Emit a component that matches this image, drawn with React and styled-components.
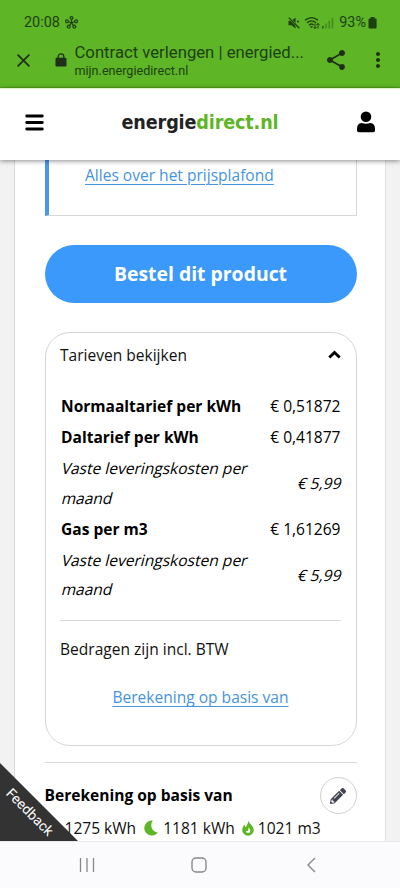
import React from 'react'
import styled,{createGlobalStyle} from 'styled-components'
import {FaPencilAlt} from 'react-icons/fa'
import {MdShare,MdMoreVert} from 'react-icons/md'

const GlobalStyle = createGlobalStyle`
    *{
        box-sizing  : border-box;
    }
    body{
        margin      : 0;
        background  : #f2f2f2;
        font-family : 'Open Sans', sans-serif;
        font-size   : 15.56px;
        color       : #111;
    }
`

const Screen = styled.div`
    display         : flex;
    flex-direction  : column;
    width           : 400px;
    height          : 888px;
    overflow        : hidden;
`

const Browser = styled.div`
    height          : 88px;
    flex            : none;
    background      : #5eb526;
    border-bottom   : 1px solid #50a51d;
    color           : #1d3f12;
    font-family     : Roboto, sans-serif;
`

const StatusBar = styled.div`
    display         : flex;
    align-items     : center;
    height          : 36px;
    padding         : 9px 23px 0 24px;
    font-size       : 14.4px;
`

const StatusIcons = styled.div`
    display         : flex;
    align-items     : center;
    margin-left     : auto;
`

const Toolbar = styled.div`
    display         : flex;
    align-items     : center;
    height          : 48px;
    padding-left    : 17px;
    color           : #1f2f1a;
`

const Titles = styled.div`
    width           : 234px;
    margin          : 1px 0 0 8px;
    white-space     : nowrap;
    color           : #1d3f12;
`

const Title = styled.div`
    font-size       : 16.7px;
    line-height     : 20px;
`

const Url = styled.div`
    font-size       : 12.6px;
    line-height     : 16px;
`

const ToolIcon = styled.div`
    display         : flex;
    font-size       : ${p=>p.size};
    margin          : ${p=>p.margin};
`

const Header = styled.header`
    position        : relative;
    z-index         : 1;
    display         : flex;
    flex            : none;
    align-items     : center;
    justify-content : space-between;
    height          : 72px;
    padding         : 0 24px 5px 25px;
    background      : white;
    border-top      : 1px solid #d9f7c2;
    box-shadow      : 0 1px 5px rgba(0,0,0,0.45);
    color           : black;
`

const Logo = styled.div`
    margin-top      : 2px;
    font-family     : 'DejaVu Sans', 'DejaVu Sans Condensed', sans-serif;
    font-stretch    : condensed;
    font-weight     : 700;
    font-size       : 19.6px;
    line-height     : 24px;
    letter-spacing  : -0.15px;
    color           : #222;
    span{
        color       : #5eb526;
    }
`

const Content = styled.main`
    flex            : 1;
    min-height      : 0;
    overflow        : hidden;
    margin          : 0 14px;
    padding         : 0 28.5px 0 29.5px;
    background      : white;
    border-left     : 1px solid #d8d8d8;
    border-right    : 1px solid #e0e0e0;
`

const Info = styled.div`
    height          : 56px;
    padding         : 3px 0 0 36.5px;
    border          : 1px solid #d8d8d8;
    border-top      : 0;
    border-left     : 4px solid #4a98ec;
    line-height     : 24px;
`

const Link = styled.a`
    color           : #4694dd;
    text-decoration : underline;
    text-decoration-thickness : 1px;
    text-underline-offset : 3px;
`

const Order = styled.button`
    display         : block;
    width           : 100%;
    height          : 58px;
    margin          : 29px 0;
    padding         : 0 0 2px;
    border          : 0;
    border-radius   : 29px;
    background      : #3b99fc;
    color           : white;
    font            : 700 19.4px 'Open Sans', sans-serif;
`

const Card = styled.section`
    height          : 414px;
    padding         : 0 14.5px;
    border          : 1px solid #d6d6d6;
    border-radius   : 25px;
`

const CardHead = styled.div`
    display         : flex;
    align-items     : center;
    justify-content : space-between;
    height          : 43px;
    margin-bottom   : 15px;
`

const Rate = styled.div`
    display         : flex;
    align-items     : center;
    justify-content : space-between;
    padding         : 1px 0.5px 1px 1px;
    line-height     : 29.2px;
    color           : black;
`

const RateName = styled.div`
    font-weight     : ${p=>p.bold?700:400};
    white-space     : nowrap;
`

// slanted upright face, each line leans on its own so they stay left aligned
const RateLine = styled.div`
    transform       : ${p=>p.slanted?'translateX(1px) skewX(-14deg)':'none'};
`

const Vat = styled.div`
    margin-top      : 15px;
    padding-top     : 14px;
    border-top      : 1px solid #d8d8d8;
    line-height     : 29px;
`

const CardLink = styled.div`
    margin-top      : 19px;
    line-height     : 29px;
    text-align      : center;
`

const Basis = styled.section`
    margin-top      : 16px;
    border-top      : 1px solid #d8d8d8;
`

const BasisHead = styled.div`
    display         : flex;
    align-items     : center;
    justify-content : space-between;
    height          : 37px;
    margin-top      : 14px;
    font-weight     : 700;
    color           : black;
    span{
        margin-top  : -2px;
    }
`

const Edit = styled.div`
    display         : flex;
    align-items     : center;
    justify-content : center;
    width           : 37px;
    height          : 37px;
    border          : 1px solid #d0d0d4;
    border-radius   : 50%;
    color           : #42454f;
    font-size       : 16px;
`

const Usage = styled.div`
    display         : flex;
    align-items     : center;
    height          : 27px;
    padding-left    : 20px;
    white-space     : nowrap;
`

const Amount = styled.span`
    margin          : ${p=>p.margin};
`

const Feedback = styled.div`
    position        : absolute;
    left            : 0;
    top             : 763px;
    width           : 78px;
    height          : 78px;
    background      : #333;
    clip-path       : polygon(0 0,100% 100%,0 100%);
    color           : white;
    font            : 14px Roboto, sans-serif;
    span{
        position    : absolute;
        left        : 30px;
        top         : 48.5px;
        line-height : 18px;
        transform   : translate(-50%,-50%) rotate(45deg);
    }
`

const NavBar = styled.nav`
    display         : flex;
    flex            : none;
    align-items     : center;
    justify-content : space-between;
    height          : 47px;
    padding         : 0 82px 0 77px;
    background      : #fbfbfd;
    border-top      : 1px solid #e9e9ec;
`

const HomeIcon = styled.svg`
    margin-right    : 4px;
`

const Flower = () => <svg width='13' height='13' viewBox='0 0 13 13' fill='none' stroke='currentColor' strokeWidth='1.2' style={{marginLeft:5}}>
    {[0,72,144,216,288].map(a=><g key={a} transform={`rotate(${a} 6.5 6.8)`}>
        <path d='M6.5 6.8V3.5'/>
        <circle cx='6.5' cy='2' r='1.4'/>
    </g>)}
</svg>

const Mute = () => <svg width='12' height='12' viewBox='0 0 12 12' fill='currentColor' style={{marginRight:4}}>
    <path d='M.5 3.8h3L7.5.6v10.800L3.500 8.200h-3z'/>
    <path d='M.8.600l10.500 10.600' stroke='#5eb526' strokeWidth='2.2'/>
    <path d='M.8.600l10.500 10.600M9 4.500h2' stroke='currentColor' strokeWidth='1.3'/>
</svg>

const Wifi = () => <svg width='17' height='14' viewBox='0 0 17 14' fill='none' stroke='currentColor' strokeWidth='1.3'>
    <path d='M1 4.3Q7.5-1.2 14 4.3M3 6.8Q7.5 3 12 6.8M5 9.2Q7.5 7 9.5 9'/>
    <path d='M6 10.2h3l-1.5 2z' fill='currentColor' stroke='none'/>
    <path d='M11 7.5v5M9.6 11l1.4 1.6 1.4-1.6M14 12.5v-5M12.6 9L14 7.4 15.4 9' strokeWidth='1'/>
</svg>

const Signal = () => <svg width='12' height='12' viewBox='0 0 12 12' fill='currentColor' style={{margin:'0 5px 0 1px'}}>
    <path d='M0 9h1.7v2.5H0z' opacity='.7'/>
    <path d='M3.2 6.5h1.7v5H3.2zM6.4 3.7h1.7v7.8H6.4zM9.6 1h1.7v10.5H9.6z' opacity='.35'/>
</svg>

const Battery = () => <svg width='9' height='12' viewBox='0 0 9 12' fill='currentColor' style={{marginLeft:2}}>
    <path d='M2.5 0h4v1.5h1.3Q8.6 1.5 8.6 2.4v8q0 1.1-1 1.1H1.5q-1 0-1-1v-8q0-1 1-1h1z'/>
</svg>

const Lock = () => <svg width='12' height='14' viewBox='0 0 12 14'>
    <rect x='.5' y='4.800' width='11' height='8.7' rx='1.2' fill='currentColor'/>
    <path d='M3.2 6V3.6a2.8 2.8 0 0 1 5.6 0V6' fill='none' stroke='currentColor' strokeWidth='1.3'/>
</svg>

const Moon = () => <svg width='14' height='16' viewBox='0 0 14 16' fill='#5eb526'>
    <path d='M8.8.4C5.8 4.5 7 11.2 13.8 12.6C12.4 14.6 10.3 15.6 7.8 15.6A7.6 7.6 0 0 1 7.8.4z'/>
</svg>

const Flame = () => <svg width='12' height='16' viewBox='0 0 12 16' fill='#5eb526'>
    <path d='M6.2.2C6.2 3 11.8 5.6 11.8 10a5.8 5.8 0 0 1-11.6 0C.2 7.8 1.2 6 2.6 4.7Q2.7 6.2 3.8 7.2C4.8 5 6.4 3.4 6.2.2z'/>
    <path d='M6.4 7.2q2.1 1.7 1.9 3.6a2.2 2.2 0 0 1-4.4.2Q5.6 11.500 6.200 10.200T6.400 7.200z' fill='white'/>
</svg>

const rates = [
    {name:['Normaaltarief per kWh'],price:'€ 0,51872',bold:true},
    {name:['Daltarief per kWh'],price:'€ 0,41877',bold:true},
    {name:['Vaste leveringskosten per','maand'],price:'€ 5,99',slanted:true},
    {name:['Gas per m3'],price:'€ 1,61269',bold:true},
    {name:['Vaste leveringskosten per','maand'],price:'€ 5,99',slanted:true},
]

const App = () => {
    return <Screen>
        <GlobalStyle />
        <Browser>
            <StatusBar>
                20:08
                <Flower />
                <StatusIcons>
                    <Mute />
                    <Wifi />
                    <Signal />
                    93%
                    <Battery />
                </StatusIcons>
            </StatusBar>
            <Toolbar>
                <svg width='13' height='13' viewBox='0 0 13 13' stroke='currentColor' strokeWidth='1.7'><path d='M.6.6l11.8 11.8M12.4.6L.6 12.4'/></svg>
                <ToolIcon margin='-1px 0 0 24.5px'><Lock /></ToolIcon>
                <Titles>
                    <Title>Contract verlengen | energied...</Title>
                    <Url>mijn.energiedirect.nl</Url>
                </Titles>
                <ToolIcon size='24px' margin='-1px 0 0 15px'><MdShare /></ToolIcon>
                <ToolIcon size='24px' margin='-1px 0 0 18px'><MdMoreVert /></ToolIcon>
            </Toolbar>
        </Browser>
        <Header>
            <svg width='19' height='17' viewBox='0 0 19 17' stroke='currentColor' strokeWidth='2.8' strokeLinecap='round'><path d='M1.7 2h15.6M1.7 8.5h15.6M1.7 15h15.6'/></svg>
            <Logo>energie<span>direct.nl</span></Logo>
            <svg width='20' height='22' viewBox='0 0 20 22' fill='currentColor'><circle cx='10' cy='5.7' r='5.3'/><path d='M5.5 12q4.5 1.6 9 0 4.5.4 4.5 6v1.5q0 1.8-1.8 1.8H2.8Q1 21.3 1 19.5V18q0-5.6 4.5-6z'/></svg>
        </Header>
        <Content>
            <Info><Link>Alles over het prijsplafond</Link></Info>
            <Order>Bestel dit product</Order>
            <Card>
                <CardHead>
                    Tarieven bekijken
                    <svg width='13' height='9' viewBox='0 0 13 9' fill='none' stroke='black' strokeWidth='2.9'><path d='M1.3 7.5l5.2-5L11.7 7.5'/></svg>
                </CardHead>
                {rates.map((rate,i)=><Rate key={i}>
                    <RateName bold={rate.bold}>
                        {rate.name.map(line=><RateLine key={line} slanted={rate.slanted}>{line}</RateLine>)}
                    </RateName>
                    <RateLine slanted={rate.slanted}>{rate.price}</RateLine>
                </Rate>)}
                <Vat>Bedragen zijn incl. BTW</Vat>
                <CardLink><Link>Berekening op basis van</Link></CardLink>
            </Card>
            <Basis>
                <BasisHead>
                    <span>Berekening op basis van</span>
                    <Edit><FaPencilAlt /></Edit>
                </BasisHead>
                <Usage>
                    <Amount margin='0 8px 0 0'>1275 kWh</Amount>
                    <Moon />
                    <Amount margin='0 7px 0 5px'>1181 kWh</Amount>
                    <Flame />
                    <Amount margin='0 0 0 4px'>1021 m3</Amount>
                </Usage>
            </Basis>
        </Content>
        <Feedback><span>Feedback</span></Feedback>
        <NavBar>
            <svg width='18' height='16' viewBox='0 0 18 16' stroke='#888' strokeWidth='1.3'><path d='M3.5 1v14M10 1v14M16.5 1v14'/></svg>
            <HomeIcon width='16' height='16' viewBox='0 0 16 16' fill='none' stroke='#888' strokeWidth='1.4'><rect x='1' y='1' width='14' height='14' rx='4'/></HomeIcon>
            <svg width='12' height='16' viewBox='0 0 12 16' fill='none' stroke='#888' strokeWidth='1.4'><path d='M9 1L2 8l7 7'/></svg>
        </NavBar>
    </Screen>
}

export default App;
